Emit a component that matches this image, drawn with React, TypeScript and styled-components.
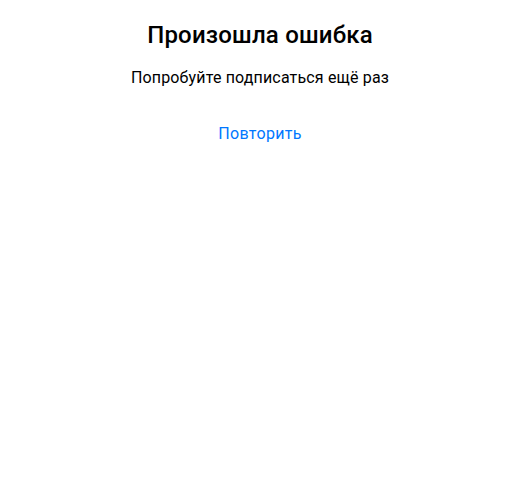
import { createGlobalStyle, styled } from "styled-components";

const GlobalStyle = createGlobalStyle`
  html, body {
    margin: 0;
    padding: 0;
    background: #fff;
  }
  body {
    font-family: Roboto, "Liberation Sans", sans-serif;
    color: #000;
  }
`;

const ErrorScreen = () => {
  return (
    <Container>
      <Title>Произошла ошибка</Title>
      <Message>Попробуйте подписаться ещё раз</Message>
      <RetryButton type="button">Повторить</RetryButton>
    </Container>
  );
};

export default function App() {
  return (
    <>
      <GlobalStyle />
      <ErrorScreen />
    </>
  );
}

const Container = styled.div`
  display: flex;
  flex-direction: column;
  align-items: center;
  padding-top: 19px;
  text-align: center;
`;

const Title = styled.h1`
  margin: 0;
  font-size: 24px;
  line-height: 32px;
  font-weight: 500;
  letter-spacing: 0.2px;
`;

const Message = styled.p`
  margin: 16px 0 0;
  font-size: 16px;
  line-height: 22px;
  letter-spacing: 0.15px;
`;

const RetryButton = styled.button`
  margin-top: 34px;
  padding: 0;
  border: none;
  background: none;
  font-family: inherit;
  font-size: 16px;
  line-height: 22px;
  letter-spacing: 0.3px;
  color: #0077ff;
  cursor: pointer;
`;
